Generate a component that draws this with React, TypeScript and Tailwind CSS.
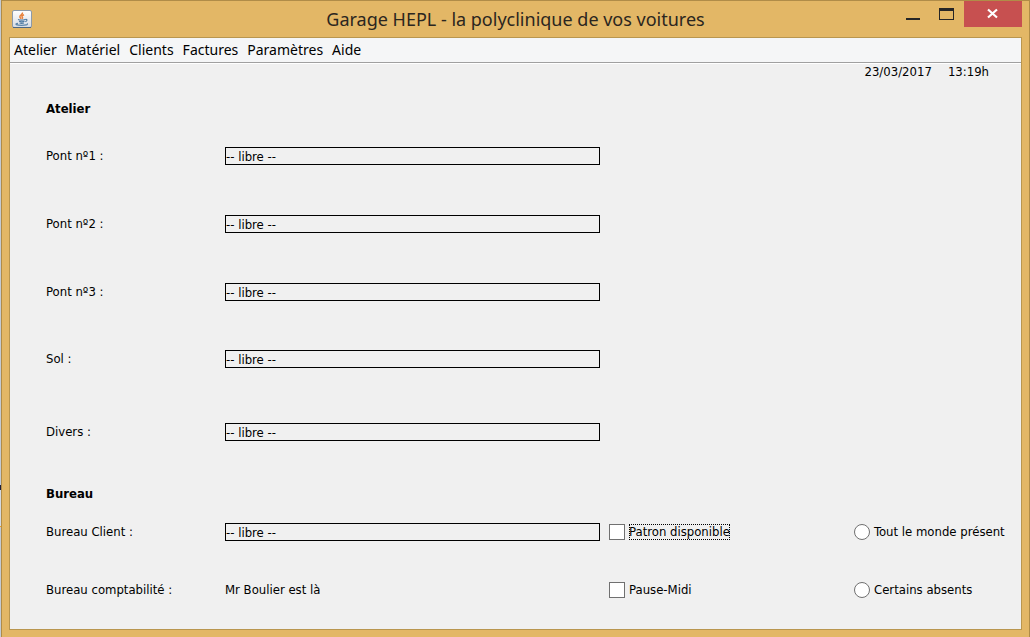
import { useState } from "react";

const MENUS = ["Atelier", "Matériel", "Clients", "Factures", "Paramètres", "Aide"];

function JavaIcon() {
  return (
    <svg width="20" height="20" viewBox="0 0 20 20" aria-hidden="true">
      <defs>
        <linearGradient id="tile" x1="0" y1="0" x2="0" y2="1">
          <stop offset="0" stopColor="#ffffff" />
          <stop offset="1" stopColor="#d5dbe3" />
        </linearGradient>
      </defs>
      <rect x="0.5" y="1.5" width="19" height="17" rx="1.5" fill="url(#tile)" stroke="#8d9aa8" />
      <path d="M1 18.500h18" stroke="#4c6784" strokeWidth="1" />
      <path d="M10.400 3.500c1 2-3.200 2.500-2.500 4.500.2.700.8 1.200 1.200 1.700M12 5.700c-2 .8-2.500 1.600-1.700 2.500.6.700.2 1-.4 1.500" fill="none" stroke="#e8803a" strokeWidth="1.500" />
      <path d="M6 10.500c1.800.7 5.400.7 7.200 0M7 12.300c1.600.6 4 .6 5.500 0M7.500 14c1.400.5 3 .5 4.500 0M13.300 10.500c2.200-.6 2.300 1.500 0 2.300" fill="none" stroke="#4f7ba3" strokeWidth="1.200" />
      <path d="M6 14.300c-4.500.8-1 2 3.500 2 3.700 0 7-.6 5.500-1.700" fill="none" stroke="#5d86aa" strokeWidth="1.200" />
    </svg>
  );
}

function TitleBar() {
  return (
    <header className="grid h-9 grid-cols-[1fr_auto_1fr] items-start">
      <div className="pt-2 pl-[10px]">
        <JavaIcon />
      </div>
      <h1 className="pt-[6px] font-['Noto_Sans','Open_Sans',sans-serif] text-[18px] leading-6 text-[#2b2620]">
        Garage HEPL - la polyclinique de vos voitures
      </h1>
      <div className="flex justify-end pr-[7px]">
        <button type="button" aria-label="Réduire" className="flex h-[26px] w-[34px] items-start justify-center">
          <svg width="16" height="22" viewBox="0 0 16 22">
            <rect x="1" y="17" width="14" height="2" fill="#262626" />
          </svg>
        </button>
        <button type="button" aria-label="Agrandir" className="flex h-[26px] w-[34px] items-start justify-center">
          <svg width="16" height="22" viewBox="0 0 16 22">
            <path d="M0 7h15v12H0zM1 10v8h13v-8z" fill="#262626" fillRule="evenodd" />
          </svg>
        </button>
        <button type="button" aria-label="Fermer" className="flex h-[26px] w-[58px] items-start justify-center bg-[#c75050]">
          <svg width="12" height="22" viewBox="0 0 12 22">
            <path d="M1 8.500l9 8M10 8.500l-9 8" stroke="#fff" strokeWidth="2.200" />
          </svg>
        </button>
      </div>
    </header>
  );
}

function Field({ id, label }: { id: string; label: string }) {
  return (
    <>
      <label htmlFor={id} className="col-start-1">
        {label}
      </label>
      <input
        id={id}
        readOnly
        defaultValue="-- libre --"
        className="mr-[9px] h-[18px] min-w-0 border border-black bg-transparent p-0 outline-none"
      />
    </>
  );
}

function Check({ label, focused }: { label: string; focused?: boolean }) {
  return (
    <label className="flex items-center gap-1">
      <input
        type="checkbox"
        className="size-4 shrink-0 appearance-none border border-[#707070] bg-white checked:bg-[#404040]"
      />
      <span
        className={
          focused
            ? "leading-4 whitespace-nowrap outline-1 -outline-offset-1 outline-black outline-dotted"
            : "leading-4 whitespace-nowrap"
        }
      >
        {label}
      </span>
    </label>
  );
}

function Radio({ label, checked, onSelect }: { label: string; checked: boolean; onSelect: () => void }) {
  return (
    <label className="flex items-center gap-1 whitespace-nowrap">
      <input
        type="radio"
        name="presence"
        checked={checked}
        onChange={onSelect}
        className="size-4 shrink-0 appearance-none rounded-full border border-[#707070] bg-white checked:bg-[#404040]"
      />
      {label}
    </label>
  );
}

export default function App() {
  const [presence, setPresence] = useState("");

  return (
    <div className="flex min-h-screen bg-[linear-gradient(to_bottom,#c3cad4_0_485px,#1d1d3c_485px_490px,#d3d9e2_490px_526px,#f0a020_526px_527px,#c3cad4_527px)] pl-px">
      <div className="flex flex-1 flex-col border-x border-t border-[#b08c48] bg-[#e3b766] pb-[7px]">
        <TitleBar />
        <div className="mx-[7px] flex flex-1 flex-col border border-[#b9964f] bg-[#f0f0f0] font-['DejaVu_Sans_Condensed','Noto_Sans',sans-serif] text-[13px] leading-4 text-black">
          <nav className="flex h-[25px] items-center gap-[9px] border-b border-[#a0a0a0] bg-[#f5f6f7] px-1 font-['Noto_Sans','Open_Sans',sans-serif] text-[14px]">
            {MENUS.map((m) => (
              <button key={m} type="button">
                {m}
              </button>
            ))}
          </nav>
          <div className="flex justify-end gap-4 border-t border-white pr-8">
            <span>23/03/2017</span>
            <span>13:19h</span>
          </div>
          <main className="pt-4 pl-9">
            <h2 className="h-[26px] leading-[26px] font-bold">Atelier</h2>
            <section className="grid grid-cols-[179fr_384fr_245fr_167fr] grid-rows-[68px_68px_68px_66px_80px] items-center">
              <Field id="pont1" label="Pont nº1 :" />
              <Field id="pont2" label="Pont nº2 :" />
              <Field id="pont3" label="Pont nº3 :" />
              <Field id="sol" label="Sol :" />
              <Field id="divers" label="Divers :" />
            </section>
            <h2 className="mt-[13px] h-[18px] leading-[18px] font-bold">Bureau</h2>
            <section className="grid grid-cols-[179fr_384fr_245fr_167fr] grid-rows-[58px_58px] items-center">
              <Field id="client" label="Bureau Client :" />
              <Check label="Patron disponible" focused />
              <Radio
                label="Tout le monde présent"
                checked={presence === "tous"}
                onSelect={() => setPresence("tous")}
              />
              <span>Bureau comptabilité :</span>
              <span>Mr Boulier est là</span>
              <Check label="Pause-Midi" />
              <Radio
                label="Certains absents"
                checked={presence === "certains"}
                onSelect={() => setPresence("certains")}
              />
            </section>
          </main>
        </div>
      </div>
    </div>
  );
}
